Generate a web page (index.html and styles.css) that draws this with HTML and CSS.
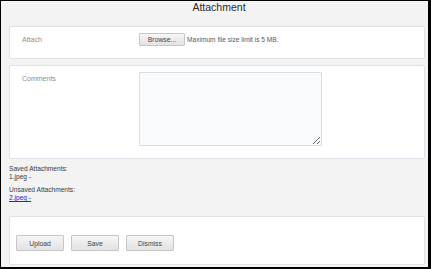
FILE: index.html
```html
<!DOCTYPE html>
<html>
<head>
<meta charset="utf-8">
<link rel="stylesheet" href="styles.css">
</head>
<body>
<div class="frame">
  <div class="title">Attachment</div>
  <div class="panel row-attach">
    <div class="label">Attach</div>
    <div class="control">
      <button class="btn browse">Browse...</button>
      <span class="hint">Maximum file size limit is 5 MB.</span>
    </div>
  </div>
  <div class="panel row-comments">
    <div class="label">Comments</div>
    <div class="control">
      <textarea class="comments"></textarea>
    </div>
  </div>
  <div class="files">
    <div class="group">
      <div>Saved Attachments:</div>
      <div>1.jpeg -</div>
    </div>
    <div class="group">
      <div>Unsaved Attachments:</div>
      <div><a href="#" class="link">2.jpeg -</a></div>
    </div>
  </div>
  <div class="panel actions">
    <button class="btn action">Upload</button>
    <button class="btn action">Save</button>
    <button class="btn action">Dismiss</button>
  </div>
</div>
</body>
</html>
```
FILE: styles.css
```css
html, body {
  margin: 0;
  padding: 0;
}
body {
  font-family: "Liberation Sans", Arial, sans-serif;
  width: 431px;
  height: 269px;
  overflow: hidden;
}
.frame {
  box-sizing: border-box;
  width: 431px;
  height: 269px;
  border-style: solid;
  border-color: #000;
  border-width: 1px 3px 2px 1px;
  background: #f3f3f3;
  padding: 0 3px 0 8px;
  display: flex;
  flex-direction: column;
}
.title {
  height: 25px;
  text-align: center;
  font-size: 10.5px;
  line-height: 13px;
  color: #2a2a2a;
  padding-left: 4px;
}
.panel {
  background: #fff;
  border: 1px solid #dde2e8;
  border-radius: 2px;
}
.row-attach, .row-comments {
  display: flex;
  padding-left: 12px;
}
.row-attach {
  padding-top: 6px;
  box-sizing: border-box;
  height: 33px;
}
.row-comments {
  margin-top: 6px;
  padding-top: 6px;
  box-sizing: border-box;
  height: 94px;
}
.label {
  width: 117px;
  font-size: 7px;
  color: #8e8e8e;
  line-height: 13px;
}
.control {
  display: flex;
  align-items: center;
  align-self: flex-start;
}
.btn {
  font-family: "Liberation Sans", Arial, sans-serif;
  font-size: 6.8px;
  color: #444;
  background: linear-gradient(#f6f6f6, #e2e2e2);
  border: 1px solid #c6c6c6;
  border-radius: 1px;
  padding: 0;
  margin: 0;
}
.browse {
  width: 46px;
  height: 13px;
}
.hint {
  font-size: 6.6px;
  color: #5a5a5a;
  margin-left: 2px;
}
.comments {
  box-sizing: border-box;
  width: 183px;
  height: 74px;
  margin: 0;
  background: #f9fafc;
  border: 1px solid #d8dee5;
  border-radius: 1px;
}
.files {
  font-size: 6.6px;
  line-height: 8px;
  color: #3a3a3a;
  padding-top: 6px;
  height: 57px;
  box-sizing: border-box;
}
.group + .group {
  margin-top: 5px;
}
.link {
  color: #2222e0;
  text-decoration: underline;
}
.actions {
  box-sizing: border-box;
  height: 49px;
  display: flex;
  gap: 7px;
  padding: 18px 0 0 6px;
  align-items: flex-start;
}
.action {
  width: 48px;
  height: 16px;
}
```
